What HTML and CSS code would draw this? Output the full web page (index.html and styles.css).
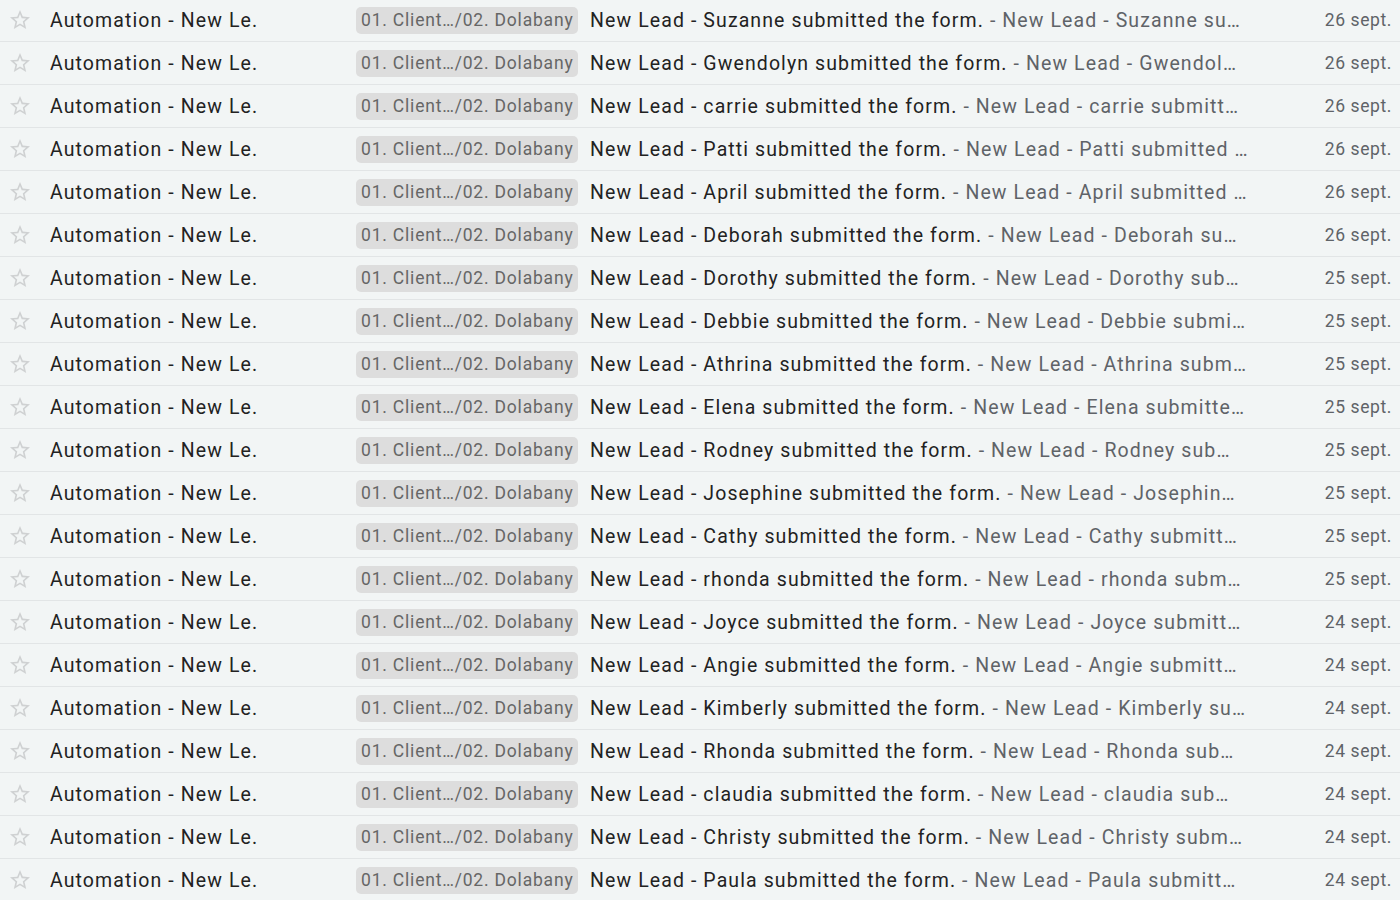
FILE: index.html
```html
<!DOCTYPE html>
<html>
<head>
<meta charset="utf-8">
<link rel="stylesheet" href="styles.css">
</head>
<body>
<div class="list" id="list"></div>
<script>
var rows = [
["Suzanne","Suzanne su…","26"],["Gwendolyn","Gwendol…","26"],["carrie","carrie submitt…","26"],
["Patti","Patti submitted …","26"],["April","April submitted …","26"],["Deborah","Deborah su…","26"],
["Dorothy","Dorothy sub…","25"],["Debbie","Debbie submi…","25"],["Athrina","Athrina subm…","25"],
["Elena","Elena submitte…","25"],["Rodney","Rodney sub…","25"],["Josephine","Josephin…","25"],
["Cathy","Cathy submitt…","25"],["rhonda","rhonda subm…","25"],["Joyce","Joyce submitt…","24"],
["Angie","Angie submitt…","24"],["Kimberly","Kimberly su…","24"],["Rhonda","Rhonda sub…","24"],
["claudia","claudia sub…","24"],["Christy","Christy subm…","24"],["Paula","Paula submitt…","24"]
];
var star = '<svg class="star" viewBox="0 0 24 24" width="24" height="24"><path d="M22 9.24l-7.19-.62L12 2 9.19 8.63 2 9.24l5.46 4.73L5.82 21 12 17.27 18.18 21l-1.63-7.03L22 9.24zM12 15.4l-3.76 2.27 1-4.28-3.32-2.88 4.38-.38L12 6.1l1.71 4.04 4.38.38-3.32 2.88 1 4.28L12 15.4z"/></svg>';
var html = '';
rows.forEach(function(r){
  html += '<div class="row">' +
    '<div class="star-cell">' + star + '</div>' +
    '<div class="sender">Automation - New Le.</div>' +
    '<div class="label-cell"><span class="label">01. Client…/02. Dolabany</span></div>' +
    '<div class="content"><span class="subject">New Lead - ' + r[0] + ' submitted the form.</span>' +
    '<span class="snippet"> - New Lead - ' + r[1] + '</span></div>' +
    '<div class="date">' + r[2] + ' sept.</div>' +
    '</div>';
});
document.getElementById('list').innerHTML = html;
</script>
</body>
</html>
```
FILE: styles.css
```css
html, body {
  margin: 0;
  padding: 0;
  background: #f2f5f5;
}
body {
  font-family: Roboto, "Noto Sans", Arial, sans-serif;
  color: #202124;
  overflow: hidden;
}
.list {
  display: flex;
  flex-direction: column;
  margin-top: -1px;
}
.row {
  display: flex;
  align-items: center;
  height: 42px;
  border-bottom: 1px solid #e2e5e6;
  background: #f2f5f5;
  font-size: 19.5px;
  letter-spacing: 1.1px;
}
.star-cell {
  width: 50px;
  flex: none;
  display: flex;
  align-items: center;
  padding-left: 8px;
  box-sizing: border-box;
}
.star {
  fill: #cfd1d2;
  display: block;
}
.sender {
  width: 306px;
  flex: none;
  white-space: nowrap;
  overflow: hidden;
  color: #222;
}
.label-cell {
  flex: none;
  width: 234px;
  display: flex;
  align-items: center;
}
.label {
  display: inline-block;
  background: #dddddd;
  color: #666;
  font-size: 17.5px;
  letter-spacing: 0.8px;
  line-height: 27px;
  height: 27px;
  padding: 0 5px 0 5px;
  border-radius: 5px;
  white-space: nowrap;
}
.content {
  flex: 1;
  min-width: 0;
  white-space: nowrap;
  overflow: hidden;
  padding-right: 30px;
  box-sizing: border-box;
}
.subject {
  color: #222;
}
.snippet {
  color: #5f6368;
}
.date {
  flex: none;
  width: 108px;
  text-align: right;
  padding-right: 8px;
  box-sizing: border-box;
  color: #5f6368;
  font-size: 17.5px;
  letter-spacing: 0.6px;
}
```
